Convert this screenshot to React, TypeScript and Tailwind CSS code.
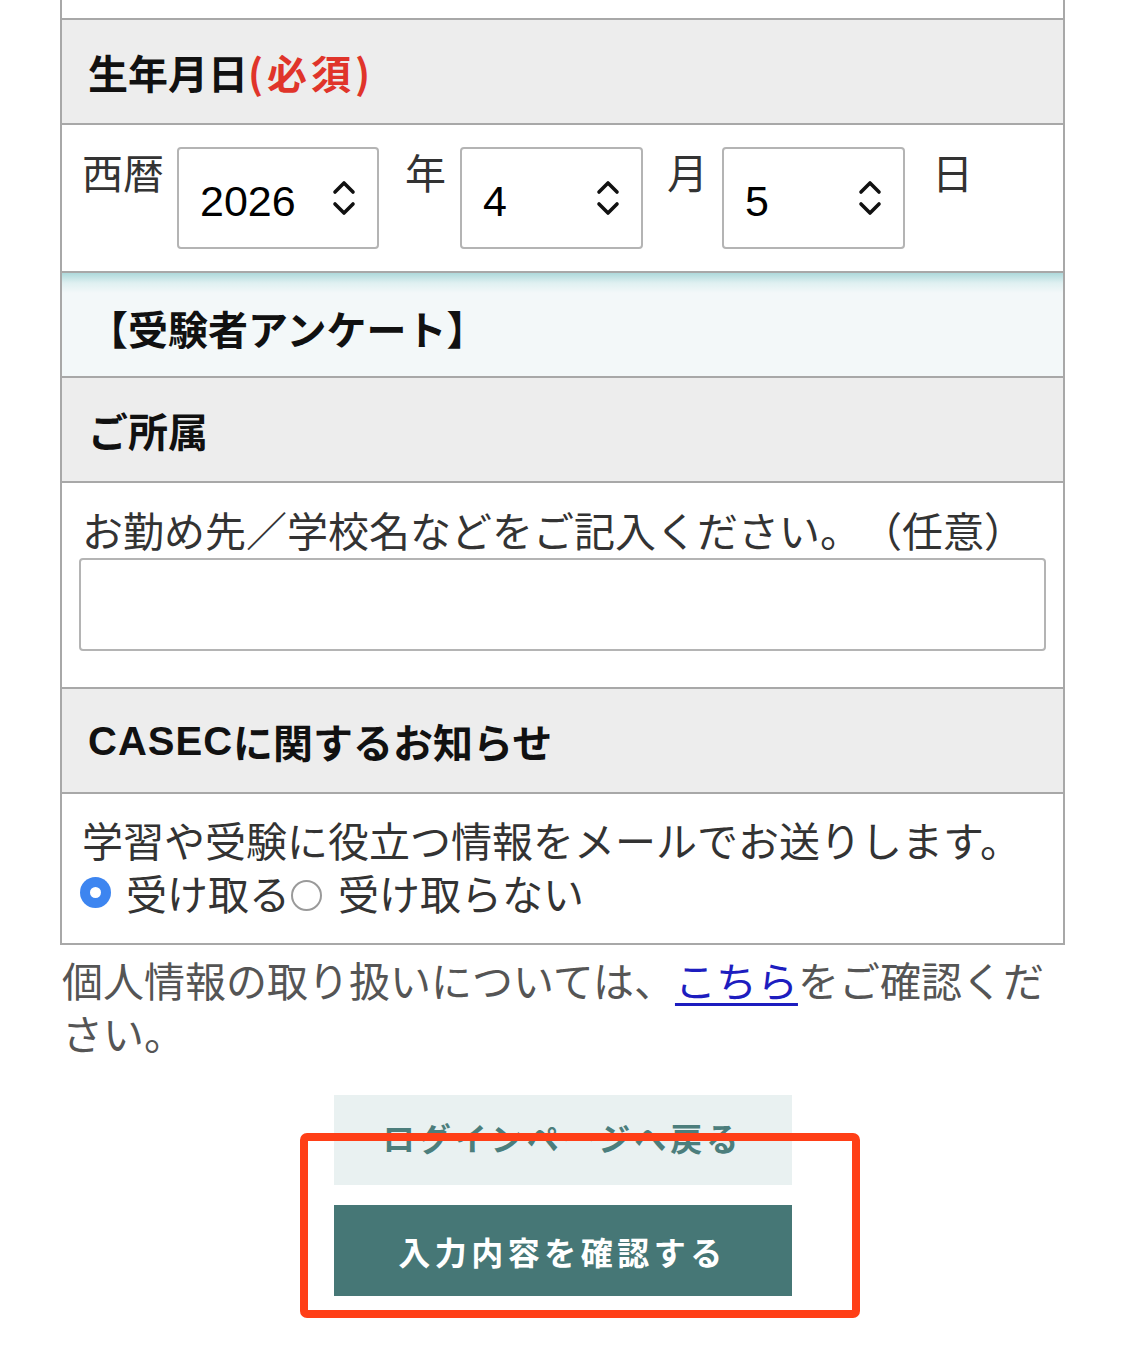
import React from "react";

const jp = { fontFamily: '"Noto Sans CJK JP", "Noto Sans", sans-serif' };

function Chevron() {
  return (
    <svg width="26" height="40" viewBox="0 0 26 40" fill="none" stroke="#111" strokeWidth="3.6" strokeLinecap="round" strokeLinejoin="round">
      <path d="M4 14 L13 5 L22 14" />
      <path d="M4 26 L13 35 L22 26" />
    </svg>
  );
}

function Select({ value, w }: { value: string; w: string }) {
  return (
    <div className={`${w} h-[102px] border-2 border-[#b4b4b4] rounded-[4px] bg-white flex items-center justify-between pl-[21px] pr-[20px]`}>
      <span className="text-[43px] text-black leading-none pt-[6px]" style={{ fontFamily: '"Liberation Sans", Arial, sans-serif' }}>{value}</span>
      <Chevron />
    </div>
  );
}

function Header({ children, light }: { children: React.ReactNode; light?: boolean }) {
  return (
    <div
      className={`h-[105px] border-b-2 border-[#a8a8a8] flex items-center pl-[26px] text-[40px] font-bold text-[#111] ${light ? "bg-[linear-gradient(to_bottom,#aed9db_0px,#dff0f1_10px,#f3f8f9_20px,#f3f8f9_100%)]" : "bg-[#ededed]"}`}
    >
      {children}
    </div>
  );
}

export default function App() {
  return (
    <div className="relative w-[1125px] min-h-[1360px] bg-white [text-spacing-trim:space-all]" style={jp}>
      <div className="ml-[60px] w-[1005px]">
        <div className="border-x-2 border-b-2 border-[#a8a8a8]">
          <div className="h-[20px] border-b-2 border-[#a8a8a8] bg-white" />
          <Header>
            <span>生年月日</span>
            <span className="text-[#e0342a] tracking-[4px]">(必須)</span>
          </Header>
          <div className="h-[148px] border-b-2 border-[#a8a8a8] bg-white flex items-start pt-[22px] pl-[20px] text-[41px] text-[#333] leading-[48px]">
            <span>西暦</span>
            <div className="ml-[13px]"><Select value="2026" w="w-[202px]" /></div>
            <span className="ml-[26px]">年</span>
            <div className="ml-[14px]"><Select value="4" w="w-[183px]" /></div>
            <span className="ml-[24px]">月</span>
            <div className="ml-[14px]"><Select value="5" w="w-[183px]" /></div>
            <span className="ml-[27px]">日</span>
          </div>
          <Header light>
            <span className="pt-[6px]">【受験者アンケート】</span>
          </Header>
          <Header>ご所属</Header>
          <div className="h-[206px] border-b-2 border-[#a8a8a8] bg-white pt-[20px] px-[17px] text-[41px] text-[#333] leading-[53px]">
            <p className="pl-[3px]">お勤め先／学校名などをご記入ください。（任意）</p>
            <div className="mt-[2px] h-[93px] border-2 border-[#b4b4b4] rounded-[4px] bg-white" />
          </div>
          <Header>
            <span style={{ fontFamily: '"Liberation Sans", Arial, sans-serif' }} className="tracking-[1px]">CASEC</span>
            <span>に関するお知らせ</span>
          </Header>
          <div className="h-[149px] bg-white pt-[19px] pl-[18px] text-[41px] text-[#333] leading-[53px]">
            <p className="pl-[2px]">学習や受験に役立つ情報をメールでお送りします。</p>
            <div className="flex items-center">
              <span className="w-[31px] h-[31px] rounded-full bg-[#3d85f0] flex items-center justify-center shrink-0">
                <span className="w-[11px] h-[11px] rounded-full bg-white" />
              </span>
              <span className="ml-[15px]">受け取る</span>
              <span className="ml-[1px] w-[31px] h-[31px] rounded-full border-2 border-[#9a9a9a] bg-white shrink-0 mt-[6px]" />
              <span className="ml-[16px]">受け取らない</span>
            </div>
          </div>
        </div>
        <p className="mt-[8px] pl-[2px] text-[41px] leading-[53px] text-[#555]">
          個人情報の取り扱いについては、<span className="text-[#1d1dbf] underline decoration-[3px] underline-offset-[6px]">こちら</span>をご確認ください。
        </p>
      </div>
      <div className="flex flex-col items-center gap-[20px] mt-[36px] pb-[64px]">
        <div className="w-[458px] h-[90px] bg-[#e9f1f1] flex items-center justify-center text-[32px] font-bold text-[#4c7e7c] tracking-[4px] pb-[6px]">
          ログインページへ戻る
        </div>
        <div className="w-[458px] h-[91px] bg-[#467776] flex items-center justify-center text-[32px] font-bold text-white tracking-[4.5px]">
          入力内容を確認する
        </div>
      </div>
      <div className="absolute left-[300px] top-[1133px] w-[560px] h-[185px] border-[8px] border-[#ff3f17] rounded-[7px] pointer-events-none" />
    </div>
  );
}
